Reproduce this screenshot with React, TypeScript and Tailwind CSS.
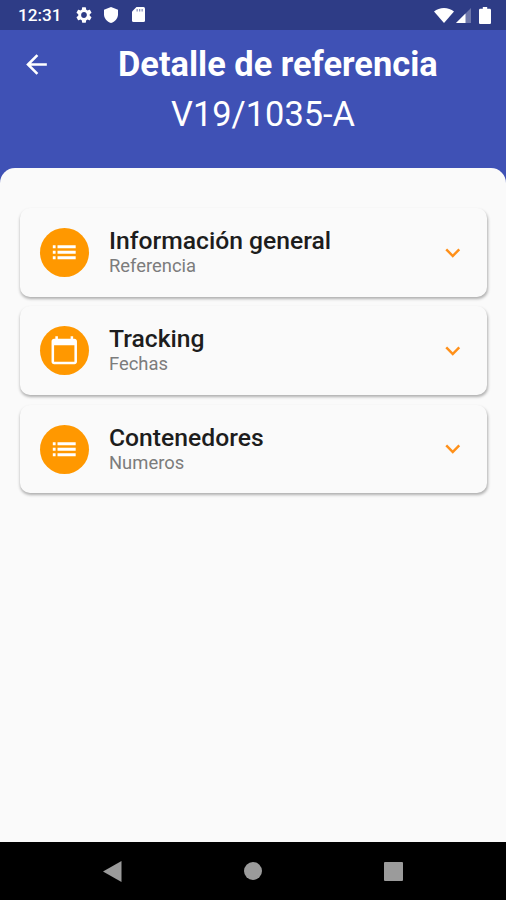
import { useState } from 'react'

type IconName = 'list' | 'calendar'

interface Section {
  id: string
  title: string
  subtitle: string
  icon: IconName
}

const SECTIONS: Section[] = [
  { id: 'general', title: 'Información general', subtitle: 'Referencia', icon: 'list' },
  { id: 'tracking', title: 'Tracking', subtitle: 'Fechas', icon: 'calendar' },
  { id: 'containers', title: 'Contenedores', subtitle: 'Numeros', icon: 'list' },
]

const ICON_PATHS: Record<IconName, string> = {
  list: 'M3 13.200h2.200v-2.400H3v2.400zm0 4.300h2.200v-2.400H3v2.400zm0-8.600h2.200V6.500H3v2.400zm3.700 4.300h14.300v-2.400H6.700v2.400zm0 4.300h14.300v-2.400H6.700v2.400zM6.700 6.500v2.400h14.300V6.500H6.700z',
  calendar: 'M20 3h-1V1h-2v2H7V1H5v2H4c-1.1 0-2 .9-2 2v16c0 1.1.9 2 2 2h16c1.1 0 2-.9 2-2V5c0-1.1-.9-2-2-2zm0 18H4V8h16v13z',
}

function StatusBar() {
  return (
    <div className="flex h-[30px] shrink-0 items-center justify-between bg-[#2e3c86] pr-[15px] pl-[18px] text-white">
      <div className="flex items-center">
        <span className="w-[58px] pt-px text-[17.2px] leading-none font-medium">12:31</span>
        {/* Settings */}
        <svg className="h-4 w-4" viewBox="2 2 20 20" fill="currentColor">
          <path d="M19.14 12.94c.04-.3.06-.61.06-.94 0-.32-.02-.64-.07-.94l2.03-1.58a.49.49 0 0 0 .12-.61l-1.92-3.32a.488.488 0 0 0-.59-.22l-2.39.96c-.5-.38-1.03-.7-1.62-.94l-.36-2.54a.484.484 0 0 0-.48-.41h-3.84c-.24 0-.43.17-.47.41l-.36 2.54c-.59.24-1.13.57-1.62.94l-2.39-.96c-.22-.08-.47 0-.59.22L2.74 8.87c-.12.21-.08.47.12.61l2.03 1.58c-.05.3-.09.63-.09.94s.02.64.07.94l-2.03 1.58a.49.49 0 0 0-.12.61l1.92 3.32c.12.22.37.29.59.22l2.39-.96c.5.38 1.03.7 1.62.94l.36 2.54c.05.24.24.41.48.41h3.84c.24 0 .44-.17.47-.41l.36-2.54c.59-.24 1.13-.56 1.62-.94l2.39.96c.22.08.47 0 .59-.22l1.92-3.32c.12-.22.07-.47-.12-.61l-2.01-1.58zM12 15.6A3.61 3.61 0 0 1 8.4 12c0-1.98 1.62-3.6 3.6-3.6s3.6 1.62 3.6 3.6-1.62 3.6-3.6 3.6z" />
        </svg>
        {/* Shield */}
        <svg className="ml-3 h-4 w-[14px]" viewBox="0 0 14 16" fill="currentColor">
          <path d="M7 0 0 2.7v4.6C0 11.3 3 14.9 7 16c4-1.1 7-4.700 7-8.700V2.700z" />
        </svg>
        {/* SD card */}
        <svg className="ml-[14px] h-[15px] w-[13px]" viewBox="0 0 13 15">
          <path fill="currentColor" d="M4.500 0H11.500A1.500 1.500 0 0 1 13 1.500V13.500A1.500 1.500 0 0 1 11.500 15H1.500A1.500 1.500 0 0 1 0 13.500V4.500z" />
          <path fill="#2e3c86" opacity=".55" d="M4.500 2h1.300v2.500H4.500zM7 2h1.300v2.500H7zM9.500 2h1.300v2.500H9.500z" />
        </svg>
      </div>
      <div className="flex items-center">
        {/* Wifi */}
        <svg className="h-[15px] w-5" viewBox="0 0 20 15" fill="currentColor">
          <path d="M10 15 0 3.500C2.800 1.200 6.200 0 10 0s7.200 1.200 10 3.500z" />
        </svg>
        {/* Cell signal */}
        <svg className="ml-[2px] h-[15px] w-[15px]" viewBox="0 0 15 15" fill="currentColor">
          <path opacity=".3" d="M15 0v15H0z" />
          <path d="M9.500 5.500V15H0z" />
        </svg>
        {/* Battery */}
        <svg className="ml-2 h-[17px] w-3" viewBox="0 0 12 17" fill="currentColor">
          <path d="M3.800 0h4.400v1.700h2.500c.7 0 1.300.6 1.300 1.300v12.700c0 .7-.6 1.300-1.300 1.300H1.300C.6 17 0 16.400 0 15.700V3c0-.7.6-1.300 1.300-1.300h2.500z" />
        </svg>
      </div>
    </div>
  )
}

function SectionCard({ section, open, onToggle }: { section: Section; open: boolean; onToggle: () => void }) {
  return (
    <button
      type="button"
      onClick={onToggle}
      className="flex h-[88.5px] w-full items-center rounded-[10px] bg-[#fafafa] pr-5 pl-5 text-left shadow-[0.5px_2px_3px_rgba(0,0,0,0.3)]"
    >
      <span className="flex h-[49px] w-[49px] shrink-0 items-center justify-center rounded-full bg-[#ff9800] text-white">
        <svg className="h-[30.5px] w-[30.5px]" viewBox="0 0 24 24" fill="currentColor">
          <path d={ICON_PATHS[section.icon]} />
        </svg>
      </span>
      <span className="ml-5 flex flex-1 flex-col">
        <span className="text-[24.7px] leading-7 font-medium text-[#1d1d1d]">{section.title}</span>
        <span className="-mt-px text-[18.4px] leading-6 text-[#7c7c7c]">{section.subtitle}</span>
      </span>
      <svg
        className={`h-[29.5px] w-[29.5px] text-[#ff9019] ${open ? 'rotate-180' : ''}`}
        viewBox="0 0 24 24"
        fill="currentColor"
      >
        <path d="M16.590 8.590 12 13.170 7.410 8.590 6 10l6 6 6-6z" />
      </svg>
    </button>
  )
}

export default function App() {
  const [openId, setOpenId] = useState<string | null>(null)

  return (
    <div className="flex h-[900px] w-[506px] flex-col overflow-hidden bg-[#3f51b5] font-[Roboto,sans-serif]">
      <StatusBar />

      <header className="flex h-[138px] shrink-0 items-start pt-4 pl-[21px] text-white">
        <button type="button" className="mt-[3px] h-[31px] w-[31px]" aria-label="Volver">
          <svg className="h-[31px] w-[31px]" viewBox="0 0 24 24" fill="currentColor">
            <path d="M20 11H7.830l5.590-5.590L12 4l-8 8 8 8 1.410-1.410L7.830 13H20v-2z" />
          </svg>
        </button>
        <div className="ml-[66px] w-[320px] text-[34.4px] leading-9 whitespace-nowrap">
          <h1 className="font-bold">Detalle de referencia</h1>
          <p className="mt-[14px] pl-[53px]">V19/1035-A</p>
        </div>
      </header>

      <main className="flex flex-1 flex-col gap-[9.9px] rounded-t-[15px] bg-[#fafafa] pt-10 pr-[19px] pl-5">
        {SECTIONS.map(section => (
          <SectionCard
            key={section.id}
            section={section}
            open={openId === section.id}
            onToggle={() => setOpenId(openId === section.id ? null : section.id)}
          />
        ))}
      </main>

      {/* System navigation */}
      <nav className="flex h-[58px] shrink-0 items-center justify-between bg-black pr-[103px] pl-[103px] text-[#9b9b9b]">
        <svg className="h-[21px] w-[19px]" viewBox="0 0 19 21" fill="currentColor">
          <path d="M18.500 0v21L0 10.500z" />
        </svg>
        <span className="h-[18px] w-[18px] rounded-full bg-[#9b9b9b]" />
        <span className="h-[19px] w-[19px] rounded-[1px] bg-[#9b9b9b]" />
      </nav>
    </div>
  )
}
